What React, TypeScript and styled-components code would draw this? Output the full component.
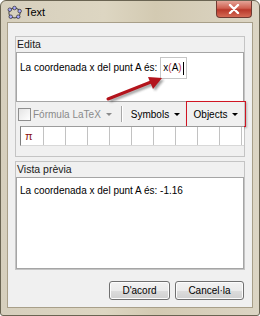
import React from "react";
import styled, { createGlobalStyle } from "styled-components";

const Global = createGlobalStyle`
  html, body { margin: 0; padding: 0; background: #fff; }
  body { font-family: "Liberation Sans", Arial, sans-serif; font-size: 10px; color: #000; }
`;

const Window = styled.div`
  position: relative;
  width: 260px;
  height: 316px;
  box-sizing: border-box;
  border: 1px solid #6a6452;
  border-radius: 6px 6px 3px 3px;
  background: linear-gradient(90deg, #d6cfbd 0%, #ddd6c2 40%, #d3cab2 60%, #dcd5c4 100%);
  display: flex;
  flex-direction: column;
  overflow: hidden;
`;

const TitleBar = styled.div`
  height: 21px;
  display: flex;
  align-items: flex-start;
  padding-left: 6px;
  box-sizing: border-box;
`;

const TitleIcon = styled.svg`
  width: 15px;
  height: 15px;
  margin-top: 4px;
`;

const TitleText = styled.span`
  margin-left: 3px;
  margin-top: 5px;
  font-size: 11px;
  color: #000;
`;

const CloseButton = styled.div`
  margin-left: auto;
  margin-right: 7px;
  width: 36px;
  height: 17px;
  box-sizing: border-box;
  border: 1px solid #6f3a32;
  border-top: none;
  border-radius: 0 0 4px 4px;
  background: linear-gradient(#e4a497 0%, #cf6050 45%, #b8382a 55%, #d46a55 100%);
  display: flex;
  align-items: center;
  justify-content: center;
`;

const Body = styled.div`
  flex: 1;
  margin: 0 6px 7px;
  background: #f0f0f0;
  border: 1px solid #a89f89;
  display: flex;
  flex-direction: column;
  padding: 13px 7px 7px;
`;

const Group = styled.section<{ $h: number; $mt?: number }>`
  height: ${(p) => p.$h}px;
  margin-top: ${(p) => p.$mt ?? 0}px;
  box-sizing: border-box;
  border: 1px solid #c4c4c4;
  display: flex;
  flex-direction: column;
`;

const GroupTitle = styled.div`
  height: 14px;
  line-height: 14px;
  padding-left: 1px;
  font-size: 10.5px;
  color: #1a1a1a;
  margin-bottom: 1px;
`;

const TextBox = styled.div<{ $h: number }>`
  height: ${(p) => p.$h}px;
  box-sizing: border-box;
  background: #fff;
  border: 1px solid #a5a5a5;
  padding: 3px 3px;
  font-size: 10px;
  line-height: 20px;
  color: #000;
  display: flex;
  align-items: flex-start;
`;

const Line = styled.div`
  display: flex;
  align-items: center;
  height: 24px;
`;

const FieldBox = styled.span`
  display: inline-flex;
  align-items: center;
  height: 22px;
  box-sizing: border-box;
  border: 1px solid #c6c6c6;
  padding: 0 2px;
  margin-left: 3px;
  font-size: 10px;
`;

const Paren = styled.span`
  color: #c0383a;
`;

const Caret = styled.span`
  display: inline-block;
  width: 1px;
  height: 13px;
  background: #000;
  margin-left: 1px;
`;

const Toolbar = styled.div`
  height: 24px;
  display: flex;
  align-items: center;
  padding-left: 2px;
`;

const CheckBox = styled.span`
  width: 11px;
  height: 11px;
  border: 1px solid #8f8f8f;
  background: linear-gradient(135deg, #e4e4e4, #ffffff);
  margin-right: 2px;
`;

const MenuLabel = styled.span<{ $disabled?: boolean }>`
  font-size: 10px;
  color: ${(p) => (p.$disabled ? "#8a8a8a" : "#000")};
  display: flex;
  align-items: center;
`;

const Caret2 = styled.span<{ $disabled?: boolean }>`
  width: 0;
  height: 0;
  border-left: 3px solid transparent;
  border-right: 3px solid transparent;
  border-top: 3px solid ${(p) => (p.$disabled ? "#8a8a8a" : "#000")};
  margin-left: 5px;
`;

const Separator = styled.span`
  width: 1px;
  height: 16px;
  background: #a8a8a8;
  box-shadow: 1px 0 0 #fff;
  margin: 0 9px 0 9px;
`;

const Highlight = styled.div`
  margin-left: auto;
  margin-right: -2px;
  height: 26px;
  width: 60px;
  box-sizing: border-box;
  border: 1.5px solid #d01523;
  box-shadow: 1px 1px 2px rgba(0, 0, 0, 0.25);
  display: flex;
  align-items: center;
  justify-content: center;
`;

const SymbolRow = styled.div`
  height: 20px;
  margin-left: 4px;
  display: flex;
  overflow: hidden;
  background: #fff;
  border-top: 1px solid #9c9c9c;
  border-left: 1px solid #7d7d7d;
  border-bottom: 1px solid #d8d8d8;
  box-sizing: border-box;
`;

const Cell = styled.span<{ $w?: number }>`
  flex: none;
  width: ${(p) => p.$w ?? 21}px;
  border-right: 1px solid #c2c2c2;
  display: flex;
  align-items: center;
  padding-left: 4px;
  box-sizing: border-box;
  font-size: 11px;
  color: #8a1010;
`;

const Buttons = styled.div`
  margin-top: auto;
  display: flex;
  justify-content: flex-end;
  gap: 5px;
  padding-right: 1px;
`;

const Button = styled.button<{ $w: number }>`
  width: ${(p) => p.$w}px;
  height: 19px;
  font-family: "Liberation Sans", Arial, sans-serif;
  font-size: 10px;
  color: #000;
  border: 1px solid #707070;
  border-radius: 3px;
  background: linear-gradient(#f2f2f2 0%, #ebebeb 50%, #dddddd 51%, #cfcfcf 100%);
  box-shadow: inset 0 0 0 1px #fcfcfc;
  padding: 0;
`;

const ArrowLayer = styled.svg`
  position: absolute;
  left: 0;
  top: 0;
  width: 260px;
  height: 316px;
  pointer-events: none;
`;

export default function App() {
  return (
    <>
      <Global />
      <Window>
        <TitleBar>
          <TitleIcon viewBox="0 0 16 16">
            <ellipse cx="8" cy="8.5" rx="6" ry="5.2" fill="none" stroke="#555" strokeWidth="1.2" />
            {[
              [3, 5],
              [8, 3.2],
              [13.5, 6.5],
              [12, 12.5],
              [4, 12.5],
            ].map(([x, y], i) => (
              <circle key={i} cx={x} cy={y} r="1.9" fill="#a8a8ff" stroke="#222" strokeWidth="0.7" />
            ))}
          </TitleIcon>
          <TitleText>Text</TitleText>
          <CloseButton>
            <svg width="12" height="10" viewBox="0 0 12 10">
              <path d="M2 1 L10 9 M10 1 L2 9" stroke="#fff" strokeWidth="2.4" strokeLinecap="round" />
            </svg>
          </CloseButton>
        </TitleBar>
        <Body>
          <Group $h={121}>
            <GroupTitle>Edita</GroupTitle>
            <TextBox $h={50}>
              <Line>
                La coordenada x del punt A és:
                <FieldBox>
                  x<Paren>(</Paren>A<Paren>)</Paren>
                  <Caret />
                </FieldBox>
              </Line>
            </TextBox>
            <Toolbar>
              <CheckBox />
              <MenuLabel $disabled>
                Fórmula LaTeX
                <Caret2 $disabled />
              </MenuLabel>
              <Separator />
              <MenuLabel>
                Symbols
                <Caret2 />
              </MenuLabel>
              <Highlight>
                <MenuLabel>
                  Objects
                  <Caret2 />
                </MenuLabel>
              </Highlight>
            </Toolbar>
            <SymbolRow>
              <Cell $w={23}>π</Cell>
              {Array.from({ length: 10 }).map((_, i) => (
                <Cell key={i} $w={22} />
              ))}
            </SymbolRow>
          </Group>
          <Group $h={109} $mt={4}>
            <GroupTitle>Vista prèvia</GroupTitle>
            <TextBox $h={92}>La coordenada x del punt A és: -1.16</TextBox>
          </Group>
          <Buttons>
            <Button $w={61}>D'acord</Button>
            <Button $w={69}>Cancel·la</Button>
          </Buttons>
        </Body>
        <ArrowLayer viewBox="0 0 260 316">
          <defs>
            <filter id="sh" x="-20%" y="-20%" width="140%" height="140%">
              <feGaussianBlur stdDeviation="1.2" />
            </filter>
          </defs>
          <g transform="translate(2,2)" filter="url(#sh)" opacity="0.45">
            <path d="M107 98 L150 81" stroke="#333" strokeWidth="3" />
            <path d="M161 77 L147 76 L152 88 Z" fill="#333" />
          </g>
          <path d="M107 98 L150 81" stroke="#b3141c" strokeWidth="3" strokeLinecap="round" />
          <path d="M161 77 L147 76 L152 88 Z" fill="#b3141c" />
        </ArrowLayer>
      </Window>
    </>
  );
}
